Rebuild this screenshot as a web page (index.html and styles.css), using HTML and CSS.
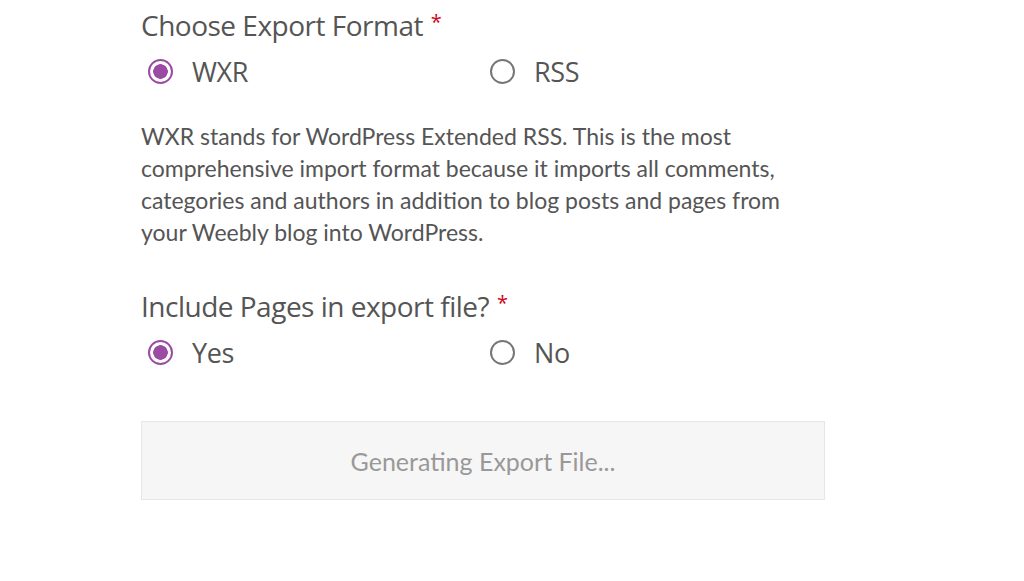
FILE: index.html
```html
<!DOCTYPE html>
<html lang="en">
<head>
<meta charset="utf-8">
<title>Export</title>
<link rel="stylesheet" href="styles.css">
</head>
<body>
<form class="export-form">
  <fieldset class="field">
    <legend class="field-label">Choose Export Format <span class="req">*</span></legend>
    <div class="choices">
      <label class="choice"><input type="radio" name="format" checked><span class="dot"></span><span class="choice-text">WXR</span></label>
      <label class="choice"><input type="radio" name="format"><span class="dot"></span><span class="choice-text">RSS</span></label>
    </div>
  </fieldset>
  <p class="desc">WXR stands for WordPress Extended RSS. This is the most comprehensive import format because it imports all comments, categories and authors in addition to blog posts and pages from your Weebly blog into WordPress.</p>
  <fieldset class="field">
    <legend class="field-label">Include Pages in export file? <span class="req">*</span></legend>
    <div class="choices">
      <label class="choice"><input type="radio" name="pages" checked><span class="dot"></span><span class="choice-text">Yes</span></label>
      <label class="choice"><input type="radio" name="pages"><span class="dot"></span><span class="choice-text">No</span></label>
    </div>
  </fieldset>
  <button type="button" class="submit" disabled>Generating Export File...</button>
</form>
</body>
</html>
```

FILE: styles.css
```css
html, body {
  margin: 0;
  padding: 0;
  background: #fff;
}

body {
  font-family: "Lato", "Open Sans", sans-serif;
  color: #555;
}

.export-form {
  width: 684px;
  margin-left: 141px;
  padding-top: 5px;
}

.field {
  border: 0;
  margin: 0;
  padding: 0;
  min-width: 0;
}

.field-label {
  padding: 0;
  font-family: "Open Sans", sans-serif;
  font-size: 28px;
  line-height: 34px;
  color: #555;
  letter-spacing: -0.5px;
}

.req {
  color: #d0021b;
  font-size: 20px;
  vertical-align: 7px;
  margin-left: 1px;
}

.choices {
  display: grid;
  grid-template-columns: 1fr 1fr;
  margin-top: 12px;
}

.choice {
  display: flex;
  align-items: center;
  gap: 19px;
  padding-left: 7px;
  height: 34px;
}

.choice input {
  position: absolute;
  opacity: 0;
  width: 0;
  height: 0;
}

.dot {
  box-sizing: border-box;
  width: 25px;
  height: 25px;
  border-radius: 50%;
  border: 2px solid #767676;
  flex: none;
}

.choice input:checked + .dot {
  border-color: #9b4ba4;
  background: radial-gradient(circle, #9b4ba4 0 7px, #fff 7.5px);
}

.choice-text {
  font-family: "Open Sans", sans-serif;
  font-size: 27px;
  letter-spacing: -0.4px;
  color: #555;
}

.desc {
  margin: 32px 0 38px;
  font-size: 23px;
  line-height: 32px;
  color: #555;
  width: 670px;
}

.submit {
  display: block;
  box-sizing: border-box;
  width: 684px;
  height: 79px;
  margin-top: 52px;
  background: #f6f6f6;
  border: 1px solid #e6e6e6;
  font-family: "Lato", sans-serif;
  font-size: 25px;
  color: #999;
  cursor: default;
}
```
